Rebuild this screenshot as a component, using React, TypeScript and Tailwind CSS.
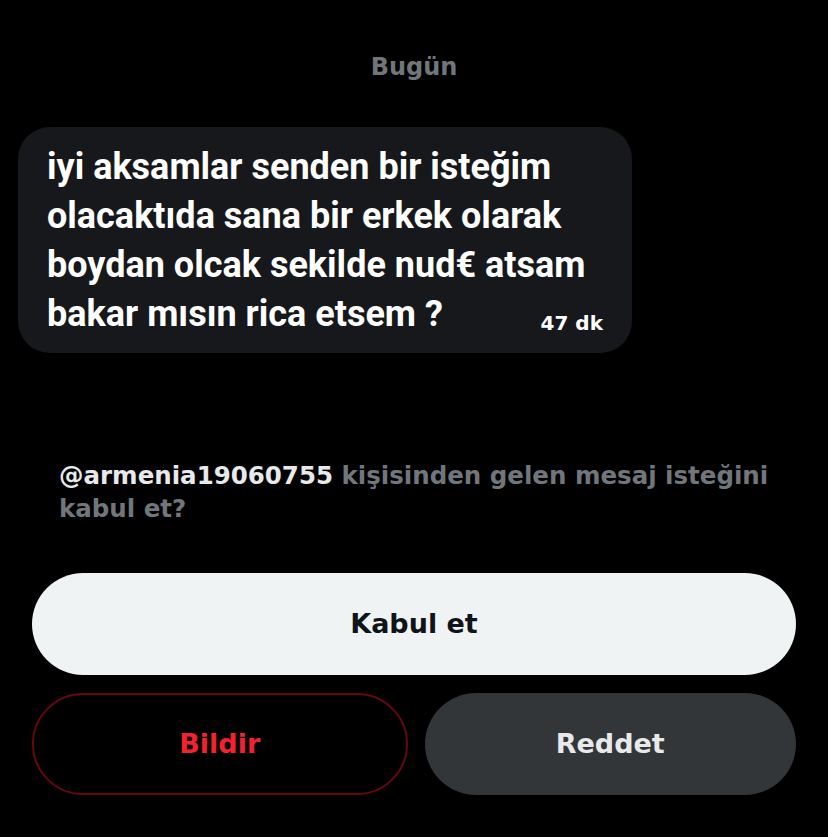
const dejavu = { fontFamily: '"DejaVu Sans", "Liberation Sans", sans-serif' };

export default function App() {
  return (
    <div className="min-h-[837px] w-full bg-black text-white" style={dejavu}>
      <div className="flex justify-center pt-[50px]">
        <span className="text-[24px] font-bold leading-[34px] text-[#71767b]">Bugün</span>
      </div>

      <div className="mt-[43px] pl-[18px]">
        <div className="relative w-[614px] rounded-[32px] bg-[#17181b] pl-[29px] pr-[20px] pt-[16px] pb-[14px]">
          <p
            className="text-[36px] font-bold leading-[49px] text-white"
            style={{ fontFamily: 'Roboto, "Liberation Sans", sans-serif' }}
          >
            iyi aksamlar senden bir isteğim
            <br />
            olacaktıda sana bir erkek olarak
            <br />
            boydan olcak sekilde nud€ atsam
            <br />
            bakar mısın rica etsem ?
          </p>
          <span className="absolute bottom-[16px] right-[29px] text-[20px] font-bold leading-[28px] text-white">
            47 dk
          </span>
        </div>
      </div>

      <div className="mt-[106px] pl-[59px] pr-[24px]">
        <p className="text-[24.5px] font-bold leading-[33px] text-[#71767b]">
          <span className="text-[#e7e9ea]">@armenia19060755</span> kişisinden gelen mesaj isteğini kabul et?
        </p>
      </div>

      <div className="mt-[48px] flex flex-col gap-[18px] px-[32px]">
        <button className="h-[102px] w-full rounded-full bg-[#eff3f4] text-[27px] font-bold text-[#0f1419]">
          Kabul et
        </button>
        <div className="flex gap-[17px]">
          <button className="h-[102px] flex-1 rounded-full border-2 border-[#67070f] bg-black text-[27px] font-bold text-[#f4212e]">
            Bildir
          </button>
          <button className="h-[102px] flex-1 rounded-full bg-[#333639] text-[27px] font-bold text-[#e7e9ea]">
            Reddet
          </button>
        </div>
      </div>
    </div>
  );
}
